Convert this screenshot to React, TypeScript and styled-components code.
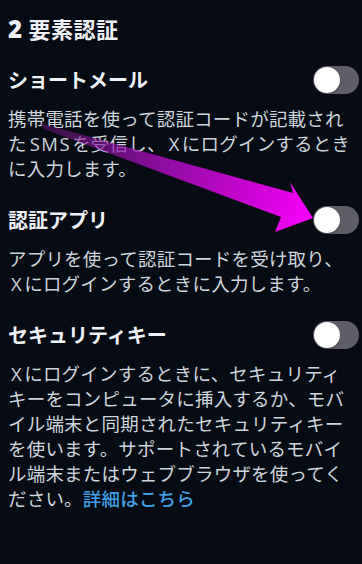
import React from 'react'
import styled, { createGlobalStyle } from 'styled-components'

const GlobalStyle = createGlobalStyle`
  html, body {
    margin: 0;
    padding: 0;
    background: #060b14;
  }
  body {
    font-family: "Noto Sans CJK JP", "Noto Sans", sans-serif;
    -webkit-font-smoothing: antialiased;
  }
`

const App = () => {
  return (
    <>
      <GlobalStyle />
      <Page>
        <Heading>
          <Digit>2</Digit>要素認証
        </Heading>

        <Section>
          <Row>
            <Title>ショートメール</Title>
            <Toggle aria-label="ショートメール" />
          </Row>
          <Description>
            携帯電話を使って認証コードが記載され
            <br />
            た<Latin>SMS</Latin>を受信し、<Latin>X</Latin>にログインするとき
            <br />
            に入力します。
          </Description>
        </Section>

        <Section>
          <Row>
            <Title>認証アプリ</Title>
            <Toggle aria-label="認証アプリ" />
          </Row>
          <Description>
            アプリを使って認証コードを受け取り、
            <br />
            <Latin>X</Latin>にログインするときに入力します。
          </Description>
        </Section>

        <Section>
          <Row>
            <Title>セキュリティキー</Title>
            <Toggle aria-label="セキュリティキー" />
          </Row>
          <Description>
            <Latin>X</Latin>にログインするときに、セキュリティ
            <br />
            キーをコンピュータに挿入するか、モバ
            <br />
            イル端末と同期されたセキュリティキー
            <br />
            を使います。サポートされているモバイ
            <br />
            ル端末またはウェブブラウザを使ってく
            <br />
            ださい。<MoreLink href="#">詳細はこちら</MoreLink>
          </Description>
        </Section>

        <Arrow viewBox="0 0 362 564" width="362" height="564">
          <defs>
            <linearGradient id="arrowFill" gradientUnits="userSpaceOnUse" x1="40" y1="125" x2="310" y2="215">
              <stop offset="0" stopColor="#6e1a80" stopOpacity="0.45" />
              <stop offset="0.45" stopColor="#a60cba" stopOpacity="0.85" />
              <stop offset="1" stopColor="#f800f8" stopOpacity="1" />
            </linearGradient>
          </defs>
          <polygon
            points="40,123 293,193 290,182 313,218 275,232 281,217 44,129"
            fill="url(#arrowFill)"
          />
        </Arrow>
      </Page>
    </>
  )
}

function Toggle(props: { on?: boolean; 'aria-label'?: string }) {
  return (
    <Track role="switch" aria-checked={!!props.on} aria-label={props['aria-label']} $on={!!props.on}>
      <Knob $on={!!props.on} />
    </Track>
  )
}

export default App

const Page = styled.div`
  position: relative;
  min-height: 564px;
  box-sizing: border-box;
  padding: 13px 3px 0 8px;
  overflow: hidden;
`

const Heading = styled.h1`
  margin: 0 0 22px;
  font-size: 22px;
  line-height: 30px;
  font-weight: 700;
  letter-spacing: 0.5px;
  color: #eef1f4;
`

const Digit = styled.span`
  font-family: "Open Sans", "Noto Sans", sans-serif;
  font-size: 24px;
  font-weight: 800;
  margin-right: 6px;
`

const Section = styled.section`
  margin-bottom: 25px;
`

const Row = styled.div`
  display: flex;
  align-items: center;
  justify-content: space-between;
  height: 28px;
`

const Title = styled.h2`
  margin: 0;
  font-size: 20px;
  line-height: 28px;
  font-weight: 700;
  color: #eef1f4;
`

const Description = styled.p`
  margin: 12px 0 0;
  font-size: 18.5px;
  line-height: 25px;
  letter-spacing: 0.2px;
  color: #cdd4db;
  white-space: nowrap;
`

const Latin = styled.span`
  font-family: "Open Sans", "Noto Sans", sans-serif;
  letter-spacing: 1.5px;
  padding: 0 1px 0 3px;
`

const MoreLink = styled.a`
  color: #3f9fe2;
  font-weight: 500;
  text-decoration: none;
`

const Track = styled.div<{ $on: boolean }>`
  flex: none;
  display: flex;
  align-items: center;
  justify-content: ${(p) => (p.$on ? 'flex-end' : 'flex-start')};
  width: 46px;
  height: 28px;
  box-sizing: border-box;
  padding: 1px;
  border-radius: 14px;
  background: ${(p) => (p.$on ? '#1d9bf0' : '#5f5e66')};
`

const Knob = styled.span<{ $on: boolean }>`
  width: 26px;
  height: 26px;
  border-radius: 50%;
  background: #ffffff;
  box-shadow: 0 1px 2px rgba(0, 0, 0, 0.35);
`

const Arrow = styled.svg`
  position: absolute;
  top: 0;
  left: 0;
  pointer-events: none;
`
